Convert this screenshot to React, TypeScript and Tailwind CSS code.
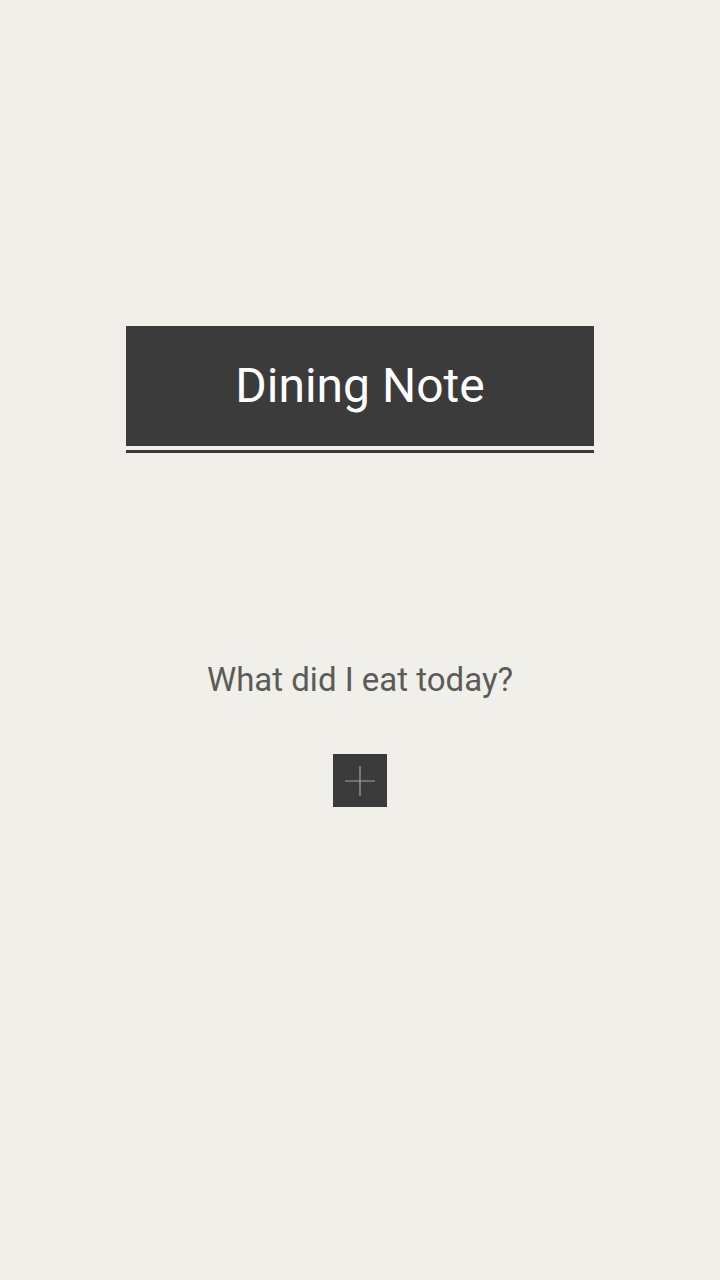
export default function App() {
  return (
    <div className="flex h-[1280px] w-[720px] flex-col items-center bg-[#f0efea] pt-[326px] font-['Roboto',sans-serif]">
      <div className="w-[468px]">
        <div className="flex h-[120px] items-center justify-center bg-[#3b3b3b]">
          <h1 className="text-[48px] leading-none text-white">Dining Note</h1>
        </div>
        <div className="mt-[4px] h-[3px] bg-[#3b3b3b]" />
      </div>
      <p className="mt-[207px] text-[33px] leading-[40px] text-[#5b5b57]">What did I eat today?</p>
      <button className="mt-[54px] flex h-[53px] w-[54px] items-center justify-center bg-[#3b3b3b]">
        <svg width="30" height="30" viewBox="0 0 30 30">
          <path d="M15 0V30M0 15H30" stroke="#a3a3a3" strokeWidth="1.2" />
        </svg>
      </button>
    </div>
  );
}
